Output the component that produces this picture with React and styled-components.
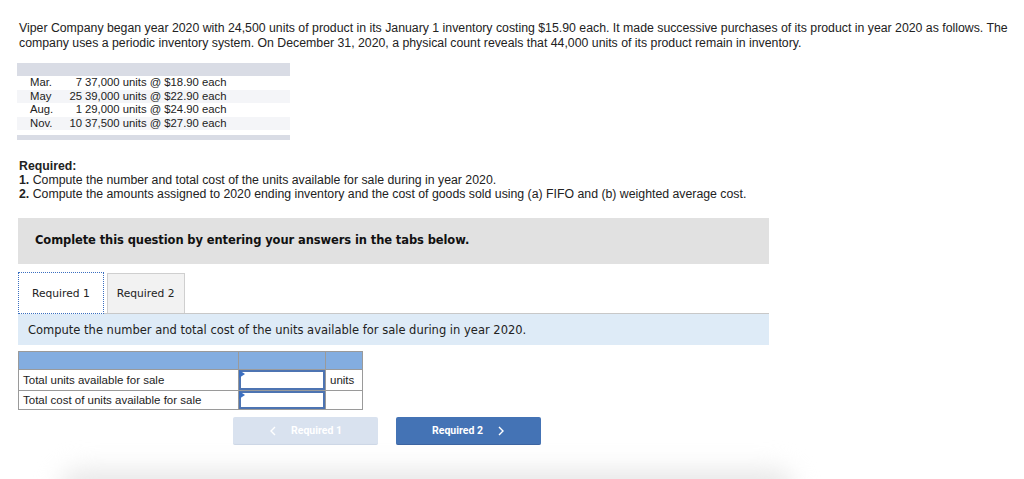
import React from "react";
import styled, { createGlobalStyle } from "styled-components";

const Global = createGlobalStyle`
  html, body { margin: 0; padding: 0; background: #fff; }
  body { font-family: "Liberation Sans", Arial, sans-serif; color: #222; overflow: hidden; }
`;

const Page = styled.div`
  width: 1024px;
  height: 479px;
  padding: 21px 10px 0 19px;
  box-sizing: border-box;
  position: relative;
  overflow: hidden;
`;

const Intro = styled.p`
  margin: 0;
  font-size: 12.3px;
  line-height: 15px;
  color: #222;
  width: 995px;
`;

const DataTable = styled.div`
  margin: 12px 0 0 -2px;
  width: 273px;
  display: flex;
  flex-direction: column;
`;

const Bar = styled.div`
  height: ${(p) => p.$h}px;
  background: #d9dce5;
`;

const DataRow = styled.div`
  display: grid;
  grid-template-columns: 48px 17px 1fr;
  height: 13.5px;
  font-size: 11.3px;
  line-height: 13.5px;
  background: ${(p) => (p.$alt ? "#f4f5f8" : "#fff")};
  color: #222;
`;

const Month = styled.span`
  padding-left: 13px;
`;

const Day = styled.span`
  text-align: right;
`;

const Desc = styled.span`
  padding-left: 3px;
`;

const Required = styled.div`
  margin-top: 19px;
  font-size: 12.3px;
  line-height: 14px;
`;

const Bold = styled.b`
  font-weight: bold;
`;

const Card = styled.div`
  margin: 17px 0 0 -1px;
  width: 751px;
`;

const Banner = styled.div`
  height: 46px;
  background: #e1e1e1;
  display: flex;
  align-items: center;
  padding-left: 17px;
  padding-bottom: 2px;
  box-sizing: border-box;
  font-family: "DejaVu Sans", Verdana, sans-serif;
  font-weight: bold;
  font-size: 11.5px;
  color: #111;
  letter-spacing: -0.1px;
`;

const TabStrip = styled.div`
  margin-top: 7px;
  display: flex;
  align-items: flex-end;
  gap: 3px;
  border-bottom: 1px solid #c8c8c8;
  height: 42px;
`;

const Tab = styled.div`
  height: ${(p) => (p.$active ? 42 : 40)}px;
  padding: 0 ${(p) => (p.$active ? 13 : 9)}px;
  box-sizing: border-box;
  display: flex;
  align-items: center;
  font-family: "DejaVu Sans", Verdana, sans-serif;
  font-size: 10.7px;
  color: #222;
  background: ${(p) => (p.$active ? "#fff" : "#f2f2f2")};
  border: ${(p) => (p.$active ? "1px dotted #3a6fc0" : "1px solid #cfcfcf")};
  border-bottom: ${(p) => (p.$active ? "1px dotted #3a6fc0" : "none")};
  margin-bottom: ${(p) => (p.$active ? -1 : 0)}px;
  position: relative;
`;

const Panel = styled.div`
  height: 31px;
  background: #deebf7;
  display: flex;
  align-items: center;
  padding-left: 10px;
  font-family: "DejaVu Sans", Verdana, sans-serif;
  font-size: 11.5px;
  color: #222;
`;

const AnswerTable = styled.table`
  margin-top: 6px;
  border-collapse: collapse;
  font-size: 11.5px;
  color: #222;
`;

const Th = styled.th`
  background: #83ade0;
  height: 17px;
  width: ${(p) => p.$w}px;
  border: 1px solid #9a9a9a;
  padding: 0;
`;

const Td = styled.td`
  border: 1px solid #9a9a9a;
  height: ${(p) => p.$h}px;
  padding: 0 4px;
  box-sizing: border-box;
`;

const InputCell = styled.td`
  border: 1px solid #9a9a9a;
  padding: 0;
  position: relative;
`;

const Input = styled.div`
  height: ${(p) => p.$h}px;
  border: 2px solid #4d74b2;
  box-sizing: border-box;
  background: #fff;
  position: relative;
  &::before {
    content: "";
    position: absolute;
    left: -2px;
    top: -2px;
    border-left: 6px solid #3b6fc0;
    border-top: 4px solid transparent;
    border-bottom: 4px solid transparent;
  }
`;

const NavRow = styled.div`
  margin: 7px 0 0 215px;
  display: flex;
  gap: 18px;
`;

const NavButton = styled.div`
  width: 145px;
  height: 28px;
  border-radius: 2px;
  display: flex;
  align-items: center;
  justify-content: center;
  gap: 14px;
  font-family: "Roboto", "Open Sans", sans-serif;
  font-weight: bold;
  font-size: 10.5px;
  color: #fff;
  background: ${(p) => (p.$disabled ? "#d9e2ef" : "#4473b5")};
  border-bottom: 1px solid ${(p) => (p.$disabled ? "#cdd7e6" : "#3a63a0")};
  box-sizing: border-box;
`;

const Chevron = styled.svg`
  width: 8px;
  height: 10px;
`;

const Shadow = styled.div`
  position: absolute;
  left: 60px;
  right: 230px;
  bottom: -30px;
  height: 40px;
  border-radius: 40px;
  background: #e8e8e8;
  filter: blur(12px);
`;

const rows = [
  ["Mar.", "7", "37,000 units @ $18.90 each"],
  ["May", "25", "39,000 units @ $22.90 each"],
  ["Aug.", "1", "29,000 units @ $24.90 each"],
  ["Nov.", "10", "37,500 units @ $27.90 each"],
];

export default function App() {
  return (
    <>
      <Global />
      <Page>
        <Intro>
          Viper Company began year 2020 with 24,500 units of product in its January 1 inventory costing $15.90 each. It
          made successive purchases of its product in year 2020 as follows. The company uses a periodic inventory system.
          On December 31, 2020, a physical count reveals that 44,000 units of its product remain in inventory.
        </Intro>
        <DataTable>
          <Bar $h={13} />
          {rows.map((r, i) => (
            <DataRow key={r[0]} $alt={i % 2 === 1}>
              <Month>{r[0]}</Month>
              <Day>{r[1]}</Day>
              <Desc>{r[2]}</Desc>
            </DataRow>
          ))}
          <Bar $h={5} style={{ marginTop: 5 }} />
        </DataTable>
        <Required>
          <Bold>Required:</Bold>
          <br />
          <Bold>1.</Bold> Compute the number and total cost of the units available for sale during in year 2020.
          <br />
          <Bold>2.</Bold> Compute the amounts assigned to 2020 ending inventory and the cost of goods sold using (a) FIFO
          and (b) weighted average cost.
        </Required>
        <Card>
          <Banner>Complete this question by entering your answers in the tabs below.</Banner>
          <TabStrip>
            <Tab $active>Required 1</Tab>
            <Tab>Required 2</Tab>
          </TabStrip>
          <Panel>Compute the number and total cost of the units available for sale during in year 2020.</Panel>
          <AnswerTable>
            <thead>
              <tr>
                <Th $w={219} />
                <Th $w={86} />
                <Th $w={36} />
              </tr>
            </thead>
            <tbody>
              <tr>
                <Td $h={20}>Total units available for sale</Td>
                <InputCell>
                  <Input $h={20} />
                </InputCell>
                <Td $h={20}>units</Td>
              </tr>
              <tr>
                <Td $h={18}>Total cost of units available for sale</Td>
                <InputCell>
                  <Input $h={18} />
                </InputCell>
                <Td $h={18} />
              </tr>
            </tbody>
          </AnswerTable>
          <NavRow>
            <NavButton $disabled>
              <Chevron viewBox="0 0 8 10">
                <path d="M6 1 L2 5 L6 9" fill="none" stroke="#fff" strokeWidth="1.4" />
              </Chevron>
              <span>Required 1</span>
            </NavButton>
            <NavButton>
              <span>Required 2</span>
              <Chevron viewBox="0 0 8 10">
                <path d="M2 1 L6 5 L2 9" fill="none" stroke="#fff" strokeWidth="1.4" />
              </Chevron>
            </NavButton>
          </NavRow>
        </Card>
        <Shadow />
      </Page>
    </>
  );
}
